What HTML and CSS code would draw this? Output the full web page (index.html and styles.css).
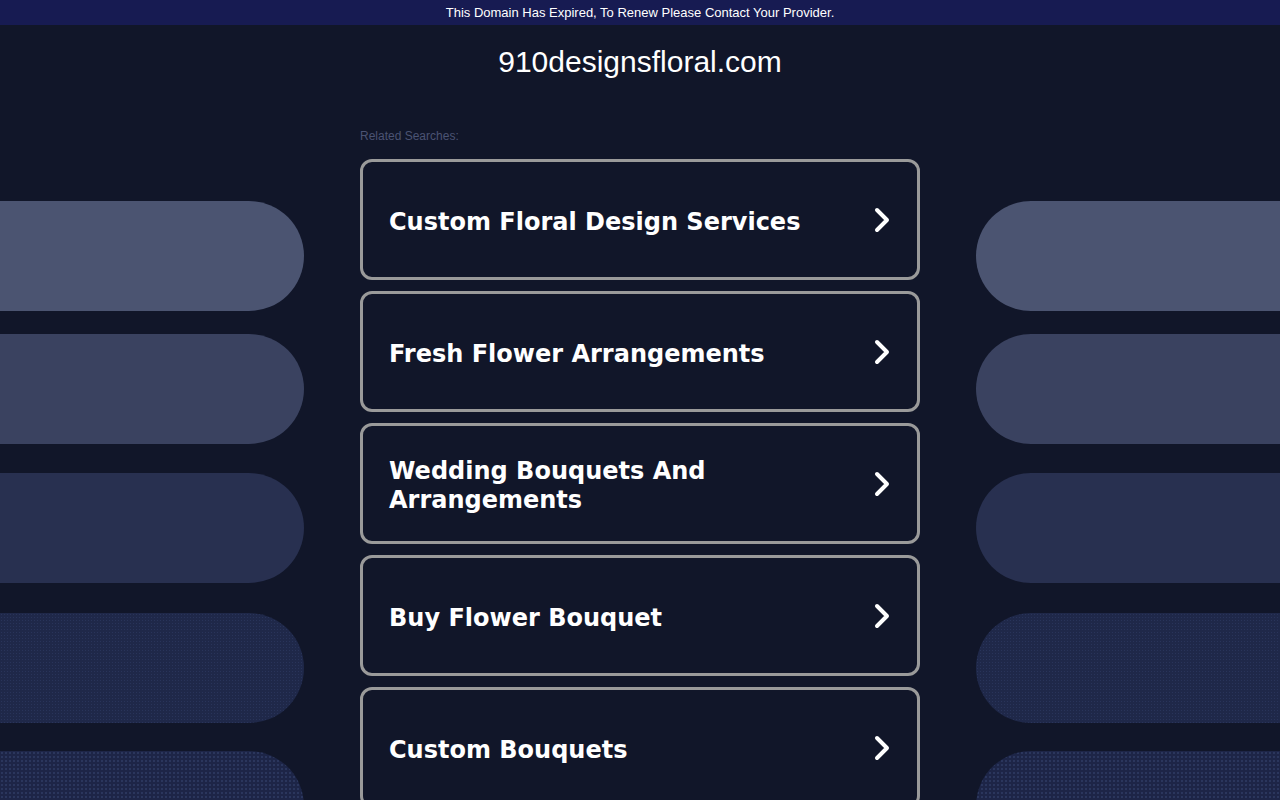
FILE: index.html
```html
<!DOCTYPE html>
<html lang="en">
<head>
<meta charset="utf-8">
<title>910designsfloral.com</title>
<link rel="stylesheet" href="styles.css">
</head>
<body>
<div class="topbar">This Domain Has Expired, To Renew Please Contact Your Provider.</div>
<div class="layout">
  <div class="side side-left">
    <div class="pill p1"></div>
    <div class="pill p2"></div>
    <div class="pill p3"></div>
    <div class="pill p4"></div>
    <div class="pill p5"></div>
  </div>
  <main class="center">
    <h1 class="domain">910designsfloral.com</h1>
    <div class="related">Related Searches:</div>
    <div class="cards">
      <a class="card" href="#"><span class="card-text">Custom Floral Design Services</span><svg class="chev" viewBox="0 0 16 26" width="16" height="26"><polyline points="3,3 13,13 3,23" fill="none" stroke="#fff" stroke-width="4" stroke-linecap="round" stroke-linejoin="round"/></svg></a>
      <a class="card" href="#"><span class="card-text">Fresh Flower Arrangements</span><svg class="chev" viewBox="0 0 16 26" width="16" height="26"><polyline points="3,3 13,13 3,23" fill="none" stroke="#fff" stroke-width="4" stroke-linecap="round" stroke-linejoin="round"/></svg></a>
      <a class="card" href="#"><span class="card-text">Wedding Bouquets And Arrangements</span><svg class="chev" viewBox="0 0 16 26" width="16" height="26"><polyline points="3,3 13,13 3,23" fill="none" stroke="#fff" stroke-width="4" stroke-linecap="round" stroke-linejoin="round"/></svg></a>
      <a class="card" href="#"><span class="card-text">Buy Flower Bouquet</span><svg class="chev" viewBox="0 0 16 26" width="16" height="26"><polyline points="3,3 13,13 3,23" fill="none" stroke="#fff" stroke-width="4" stroke-linecap="round" stroke-linejoin="round"/></svg></a>
      <a class="card" href="#"><span class="card-text">Custom Bouquets</span><svg class="chev" viewBox="0 0 16 26" width="16" height="26"><polyline points="3,3 13,13 3,23" fill="none" stroke="#fff" stroke-width="4" stroke-linecap="round" stroke-linejoin="round"/></svg></a>
    </div>
  </main>
  <div class="side side-right">
    <div class="pill p1"></div>
    <div class="pill p2"></div>
    <div class="pill p3"></div>
    <div class="pill p4"></div>
    <div class="pill p5"></div>
  </div>
</div>
</body>
</html>
```
FILE: styles.css
```css
html, body {
  margin: 0;
  padding: 0;
}
body {
  background: #111629;
  font-family: "Liberation Sans", Arial, sans-serif;
  color: #fff;
  height: 800px;
  overflow: hidden;
}
.topbar {
  height: 25px;
  line-height: 25px;
  background: #171b52;
  color: #fff;
  font-size: 13px;
  text-align: center;
}
.layout {
  display: grid;
  grid-template-columns: 304px 560px 304px;
  column-gap: 56px;
}
.side {
  display: flex;
  flex-direction: column;
  padding-top: 176px;
}
.pill {
  height: 110px;
  flex: none;
}
.side-left .pill {
  border-radius: 0 55px 55px 0;
}
.side-right .pill {
  border-radius: 55px 0 0 55px;
}
.p1 { background: #4b5471; }
.p2 { background: #3a4260; margin-top: 23px; }
.p3 { background: #283050; margin-top: 29px; }
.p4 {
  background-color: #1f2849;
  background-image: radial-gradient(circle, rgba(60, 75, 120, 0.35) 0.6px, transparent 0.9px);
  background-size: 3px 3px;
  margin-top: 30px;
}
.p5 {
  background-color: #1d2547;
  background-image: radial-gradient(circle, rgba(60, 75, 120, 0.45) 0.7px, transparent 1px);
  background-size: 4px 4px;
  margin-top: 28px;
}
.center {
  display: flex;
  flex-direction: column;
}
.domain {
  margin: 0;
  padding-top: 19px;
  font-size: 30px;
  font-weight: normal;
  line-height: 36px;
  text-align: center;
}
.related {
  margin-top: 49px;
  font-size: 12px;
  line-height: 14px;
  color: #4b5373;
}
.cards {
  margin-top: 16px;
  display: flex;
  flex-direction: column;
  gap: 11px;
}
.card {
  box-sizing: border-box;
  height: 121px;
  border: 3px solid #9a9a9a;
  border-radius: 12px;
  display: flex;
  align-items: center;
  justify-content: space-between;
  padding: 0 27px 0 26px;
  text-decoration: none;
  color: #fff;
  flex: none;
}
.card-text {
  font-family: "DejaVu Sans", Verdana, sans-serif;
  font-weight: bold;
  font-size: 24px;
  line-height: 29px;
  max-width: 420px;
  padding-top: 5px;
}
.chev {
  flex: none;
  display: block;
}
```
